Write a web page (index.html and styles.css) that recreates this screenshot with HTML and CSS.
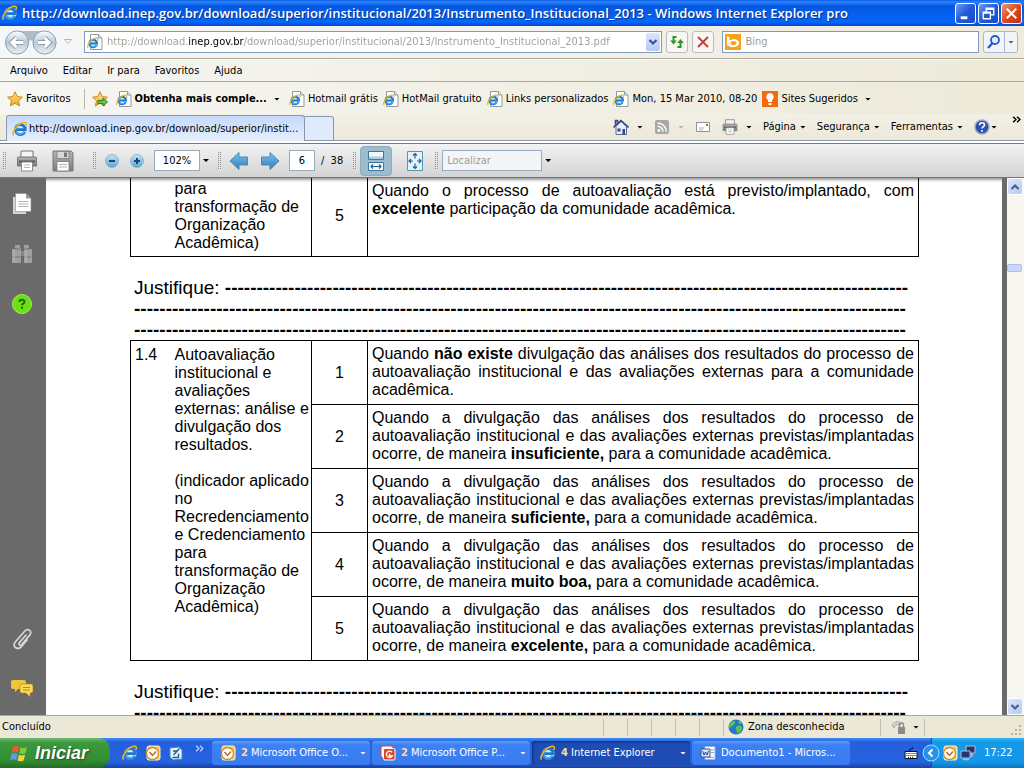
FILE: index.html
```html
<!DOCTYPE html>
<html lang="pt-BR">
<head>
<meta charset="utf-8">
<title>Instrumento_Institucional_2013 - Windows Internet Explorer pro</title>
<link rel="stylesheet" href="styles.css">
</head>
<body>
<svg class="defs" aria-hidden="true">
  <defs>
    <linearGradient id="gBlue" x1="0" y1="0" x2="0" y2="1"><stop offset="0" stop-color="#7cc4ee"/><stop offset="1" stop-color="#2b7cb8"/></linearGradient>
    <linearGradient id="gLight" x1="0" y1="0" x2="0" y2="1"><stop offset="0" stop-color="#c9e4f4"/><stop offset="1" stop-color="#5aa3d2"/></linearGradient>
    <linearGradient id="gBall" x1="0" y1="0" x2="0" y2="1"><stop offset="0" stop-color="#fff"/><stop offset=".5" stop-color="#b7c9d6"/><stop offset="1" stop-color="#e8f2f8"/></linearGradient>
    <linearGradient id="gStar" x1="0" y1="0" x2="0" y2="1"><stop offset="0" stop-color="#ffe684"/><stop offset="1" stop-color="#f7a51b"/></linearGradient>
    <linearGradient id="gGrey" x1="0" y1="0" x2="0" y2="1"><stop offset="0" stop-color="#b4b4b4"/><stop offset="1" stop-color="#7c7c7c"/></linearGradient>
    <symbol id="ie" viewBox="0 0 16 16">
      <circle cx="8.300" cy="8.500" r="6.300" fill="#d3edfc"/>
      <path d="M12.800 10.800A5 5 0 1 1 13.300 8.600H5" fill="none" stroke="#1e78cf" stroke-width="2.800"/>
      <path d="M12.300 10.800A4.700 4.700 0 0 1 4 10.500" fill="none" stroke="#52bdf2" stroke-width="1.200"/>
      <path d="M1.600 14.600C-.8 12.200 4.600 3.400 10.800 1.500c3.200-1 4.400.6 3 3.400" fill="none" stroke="#f0b51e" stroke-width="1.600"/>
    </symbol>
    <symbol id="iepage" viewBox="0 0 16 16">
      <path d="M3.500.5h8l3.500 3.500v11.500h-11.500z" fill="#fff" stroke="#8d99a5"/>
      <path d="M11.500.5v3.500h3.500" fill="#dde5ec" stroke="#8d99a5"/>
      <use href="#ie" x="0" y="3" width="12" height="12"/>
    </symbol>
    <symbol id="star" viewBox="0 0 16 16">
      <path d="M8 .8l2.200 4.800 5.200.6-3.900 3.500 1.100 5.200L8 12.300l-4.600 2.600 1.100-5.200L.6 6.200l5.200-.6z" fill="url(#gStar)" stroke="#c8891c"/>
    </symbol>
    <symbol id="outlook" viewBox="0 0 16 16">
      <rect x="2" y="1" width="13" height="14" rx="2" fill="#f6c65c" stroke="#fff3cf"/>
      <circle cx="7.500" cy="8.500" r="6" fill="#fff" stroke="#d8891b" stroke-width="1.300"/>
      <path d="M4.500 7l3 3.500L11 6.500" fill="none" stroke="#b8661b" stroke-width="1.400"/>
    </symbol>
    <symbol id="printer" viewBox="0 0 22 22">
      <path d="M5 8V1h12v7" fill="#f5f5f5" stroke="#777"/>
      <path d="M1.500 8q0-1 1-1h17q1 0 1 1v8h-19z" fill="url(#gGrey)" stroke="#777"/>
      <path d="M3 11.500h16" stroke="#555" stroke-width="2"/>
      <path d="M5.500 12h11v9h-11z" fill="#fff" stroke="#888"/>
      <path d="M8 15h6M8 17.500h6" stroke="#9cb9d0"/>
    </symbol>
  </defs>
</svg>

<header class="titlebar">
  <svg class="i16" viewBox="0 0 16 16"><use href="#ie"/></svg>
  <h1 class="title">http://download.inep.gov.br/download/superior/institucional/2013/Instrumento_Institucional_2013 - Windows Internet Explorer pro</h1>
  <button class="winbtn" aria-label="Minimizar"><svg viewBox="0 0 20 20"><path d="M5 14.500h7" stroke="#fff" stroke-width="3"/></svg></button>
  <button class="winbtn" aria-label="Restaurar"><svg viewBox="0 0 20 20"><path d="M7.500 8V4.500h8v7H12M7.500 5.500h8M4.500 8.500h7.500v7H4.500zM4.500 9.500H12" fill="none" stroke="#fff" stroke-width="1.400"/></svg></button>
  <button class="winbtn close" aria-label="Fechar"><svg viewBox="0 0 20 20"><path d="M5 5l10 10M15 5L5 15" stroke="#fff" stroke-width="2.200"/></svg></button>
</header>

<div class="navbar">
  <svg class="backfwd" viewBox="0 0 56 28" role="img" aria-label="Voltar e avançar">
    <path d="M12 2h32q8 3 8 10H4q0-7 8-10z" fill="#b4bcc3"/>
    <circle cx="12.500" cy="14" r="12" fill="url(#gBall)" stroke="#8d9ba8"/>
    <circle cx="41" cy="14" r="12" fill="url(#gBall)" stroke="#8d9ba8"/>
    <path d="M19 14H7M12 9l-5 5 5 5M34 14h12M41 9l5 5-5 5" fill="none" stroke="#8294a6" stroke-width="4.600"/>
    <path d="M19 14H7M12 9l-5 5 5 5M34 14h12M41 9l5 5-5 5" fill="none" stroke="#fff" stroke-width="3"/>
  </svg>
  <svg class="hist" viewBox="0 0 8 6"><path d="M.5.500h7L4 4.500z" fill="#fff" stroke="#b5b5b5"/></svg>
  <div class="address">
    <svg class="i16" viewBox="0 0 16 16"><use href="#iepage"/></svg>
    <input class="url" type="text" aria-label="Endereço" value="http://download.inep.gov.br/download/superior/institucional/2013/Instrumento_Institucional_2013.pdf">
    <button class="drop" aria-label="Endereços recentes"><svg viewBox="0 0 12 12"><path d="M2.500 4L6 7.500 9.500 4" fill="none" stroke="#39528c" stroke-width="2.200"/></svg></button>
  </div>
  <button class="navbtn" aria-label="Atualizar"><svg class="i16" viewBox="0 0 16 16"><path d="M7.500 3H4.500v5" fill="none" stroke="#2d9430" stroke-width="2"/><path d="M1.200 6.500h6.600L4.500 10.500z" fill="#2d9430"/><path d="M8.500 13h3V8" fill="none" stroke="#2d9430" stroke-width="2"/><path d="M8.200 9h6.600L11.500 5z" fill="#2d9430"/></svg></button>
  <button class="navbtn" aria-label="Parar"><svg class="i16" viewBox="0 0 16 16"><path d="M3 3l10 10M13 3L3 13" stroke="#c33a41" stroke-width="1.800"/></svg></button>
  <div class="search">
    <svg class="i16" viewBox="0 0 16 16"><rect width="16" height="16" fill="#f7a11c"/><path d="M2 2l2.500 1v3.500C8 4.500 14 5 14 9s-6 5-9.500 3.500L2 11z" fill="#fff"/><ellipse cx="8.500" cy="9" rx="3" ry="2" fill="#f7a11c"/></svg>
    <input class="bing" type="text" aria-label="Pesquisar" placeholder="Bing">
  </div>
  <div class="searchbtns">
    <button aria-label="Pesquisar"><svg class="i16" viewBox="0 0 16 16"><circle cx="9" cy="6" r="4" fill="#e5f0ff" stroke="#2b57c8" stroke-width="1.800"/><path d="M6.500 9L2 14" stroke="#2b57c8" stroke-width="2.400"/></svg></button>
    <button class="narrow" aria-label="Opções de pesquisa"><i class="caret blue"></i></button>
  </div>
</div>

<nav class="menubar">
  <button>Arquivo</button><button>Editar</button><button>Ir para</button><button>Favoritos</button><button>Ajuda</button>
</nav>

<div class="favbar">
  <button class="favmain"><svg class="i16" viewBox="0 0 16 16"><use href="#star"/></svg>Favoritos</button>
  <button class="addfav" aria-label="Adicionar a favoritos"><svg class="i16" viewBox="0 0 16 16"><use href="#star"/><path d="M6 9.500h5V7l4.500 4-4.500 4v-2.500H6z" fill="#62c544" stroke="#23852a"/></svg></button>
  <a href="#" class="fav"><svg class="i16" viewBox="0 0 16 16"><use href="#iepage"/></svg><b>Obtenha mais comple...</b><i class="caret"></i></a>
  <a href="#" class="fav"><svg class="i16" viewBox="0 0 16 16"><use href="#iepage"/></svg>Hotmail grátis</a>
  <a href="#" class="fav"><svg class="i16" viewBox="0 0 16 16"><use href="#iepage"/></svg>HotMail gratuito</a>
  <a href="#" class="fav"><svg class="i16" viewBox="0 0 16 16"><use href="#iepage"/></svg>Links personalizados</a>
  <a href="#" class="fav"><svg class="i16" viewBox="0 0 16 16"><use href="#iepage"/></svg>Mon, 15 Mar 2010, 08-20</a>
  <a href="#" class="fav"><svg class="i16" viewBox="0 0 16 16"><rect width="16" height="16" fill="#f26a12"/><path d="M8 2a4 4 0 0 1 2 7.300V11H6V9.300A4 4 0 0 1 8 2zM6.500 12h3v2h-3z" fill="#fff"/></svg>Sites Sugeridos<i class="caret"></i></a>
</div>

<div class="tabrow">
  <button class="tab"><svg class="i16" viewBox="0 0 16 16"><use href="#ie"/></svg><span>http://download.inep.gov.br/download/superior/instit...</span></button>
  <button class="newtab" aria-label="Nova guia"></button>
  <div class="commands">
    <button aria-label="Página inicial"><svg class="i16" viewBox="0 0 16 16"><path d="M3 7.500v8h10.500v-8L8 2.500z" fill="#e8edf7" stroke="#5a6a96"/><path d="M.5 8.500L8 1.500l7.500 7M2.500 5.500v-4h2v2" fill="none" stroke="#33458a" stroke-width="1.600"/><path d="M9.500 10h2.500v5.500H9.500zM4.500 9.500h3v3h-3z" fill="#33458a"/></svg><i class="caret"></i></button>
    <button aria-label="Feeds"><svg class="i16" viewBox="0 0 16 16"><rect x="1" y="1" width="14" height="14" rx="2" fill="#a9a9a3"/><circle cx="4.800" cy="11.500" r="1.400" fill="#fff"/><path d="M3.500 7.300a5.400 5.400 0 0 1 5.400 5.400M3.500 4a8.800 8.800 0 0 1 8.800 8.800" fill="none" stroke="#fff" stroke-width="1.500"/></svg><i class="caret off"></i></button>
    <button aria-label="Ler email"><svg class="i16" viewBox="0 0 16 16"><path d="M1.500 3.500h13v9h-13z" fill="#fff" stroke="#8f8f9b"/><path d="M4 9h5M4 10.800h4" stroke="#b5b5c0"/><path d="M11 5h2v2h-2z" fill="#c64a4a"/></svg></button>
    <button aria-label="Imprimir"><svg class="i16" viewBox="0 0 22 22"><use href="#printer"/></svg><i class="caret"></i></button>
    <button>Página<i class="caret"></i></button>
    <button>Segurança<i class="caret"></i></button>
    <button>Ferramentas<i class="caret"></i></button>
    <button class="help" aria-label="Ajuda"><svg class="i16" viewBox="0 0 16 16"><circle cx="8" cy="8" r="7" fill="#2f4fae" stroke="#9aa9cc" stroke-width="1.500"/><path d="M5.500 6.200c0-3.400 5-3 5-.3C10.500 7.700 8 7.600 8 9.600M8 11v1.800" fill="none" stroke="#fff" stroke-width="1.700"/></svg><i class="caret"></i></button>
  </div>
  <button class="more" aria-label="Mais comandos"><svg viewBox="0 0 8 6"><path d="M1 .5L3.500 3 1 5.500M4.500.5L7 3 4.500 5.500" fill="none" stroke="#000" stroke-width="1.300"/></svg></button>
</div>

<div class="pdfbar">
  <i class="grip"></i>
  <button class="pb" aria-label="Imprimir"><svg class="i22" viewBox="0 0 22 22"><use href="#printer"/></svg></button>
  <button class="pb" aria-label="Salvar"><svg class="i22" viewBox="0 0 22 22"><path d="M1 1h18l2 2v18H1z" fill="url(#gGrey)" stroke="#777"/><path d="M5 1.500h12v7H5z" fill="#d8d8d8" stroke="#888"/><path d="M12 2.500h3v4.500h-3z" fill="#777"/><path d="M5 11.500h12v9.500H5z" fill="#fff" stroke="#888"/><path d="M7 14.500h8M7 17h8" stroke="#9cb9d0"/></svg></button>
  <i class="grip wide"></i>
  <button class="zoomb" aria-label="Menos zoom"><svg class="i16" viewBox="0 0 16 16"><circle cx="8" cy="8" r="6.500" fill="url(#gLight)" stroke="#8bb8d4"/><path d="M5 8h6" stroke="#164a75" stroke-width="2"/></svg></button>
  <button class="zoomb" aria-label="Mais zoom"><svg class="i16" viewBox="0 0 16 16"><circle cx="8" cy="8" r="6.500" fill="url(#gLight)" stroke="#8bb8d4"/><path d="M5 8h6M8 5v6" stroke="#164a75" stroke-width="2"/></svg></button>
  <input class="box zoomv" type="text" aria-label="Zoom" value="102%"><button class="cb" aria-label="Níveis de zoom"><i class="caret"></i></button>
  <i class="grip"></i>
  <button class="arrow" aria-label="Página anterior"><svg class="i20" viewBox="0 0 20 20"><path d="M1 10l9-8.500V6h8.500v8H10v4.500z" fill="url(#gBlue)" stroke="#4f88ad"/></svg></button>
  <button class="arrow" aria-label="Próxima página"><svg class="i20" viewBox="0 0 20 20"><path d="M19 10l-9-8.500V6H1.500v8H10v4.500z" fill="url(#gBlue)" stroke="#4f88ad"/></svg></button>
  <input class="box pageno" type="text" aria-label="Página" value="6"><span class="total">/&nbsp; 38</span>
  <i class="grip"></i>
  <button class="fit on" aria-label="Ajustar à largura"><svg class="i20" viewBox="0 0 20 20"><path d="M2.500.5h15v8h-15zM2.500 11.500h15v8h-15z" fill="#f2f8fc" stroke="#3f7698"/><path d="M3 5.500h14V8H3z" fill="#a9cfe4"/><path d="M5 15.500h10M7 13.500l-2 2 2 2M13 13.500l2 2-2 2" fill="none" stroke="#24618b" stroke-width="1.200"/></svg></button>
  <button class="fit" aria-label="Ajustar página"><svg class="i20" viewBox="0 0 20 20"><path d="M2.500.5h15v19h-15z" fill="#e4f1f9" stroke="#5b93b5"/><path d="M10 2.500v5M8 4.500l2-2 2 2M10 17.500v-5M8 15.500l2 2 2-2M4 10h4M6 8l-2 2 2 2M16 10h-4M14 8l2 2-2 2" fill="none" stroke="#24618b" stroke-width="1.200"/></svg></button>
  <i class="grip"></i>
  <input class="box find" type="text" aria-label="Localizar" placeholder="Localizar"><button class="cb" aria-label="Opções de busca"><i class="caret"></i></button>
</div>

<main class="viewer">
  <aside class="side">
    <button aria-label="Páginas"><svg class="i22" viewBox="0 0 22 22"><path d="M2 4h13v17H2z" fill="#d5d5d5"/><path d="M4.500.5H15l5 5v13H4.500z" fill="#fff" stroke="#8a8a8a" stroke-width=".6"/><path d="M15 .5v5h5z" fill="#999"/><path d="M7.500 8.500h10M7.500 11h10M7.500 13.500h10" stroke="#b3b3b3"/></svg></button>
    <button aria-label="Localizar"><svg class="i22" viewBox="0 0 22 22"><path d="M4 2h5v3h1v15H1V6h3zM13 2h5v4h3v14h-8V5z" fill="#a0a0a0"/><path d="M1.500 14h8M13.500 14h7M4 6h5M13 6h5" stroke="#757575"/><path d="M10 8h3v5h-3z" fill="#858585"/><path d="M3 7v12M15 7v12" stroke="#bdbdbd"/></svg></button>
    <button aria-label="Como fazer"><svg class="i22" viewBox="0 0 22 22"><circle cx="11" cy="11" r="9.500" fill="#6be012" stroke="#a6ec5c"/><path d="M8.500 9c0-3 5-2.800 5-.3 0 2-2.600 1.800-2.600 3.600M11 13.800v2" fill="none" stroke="#1d6a10" stroke-width="2"/></svg></button>
    <span class="grow"></span>
    <button aria-label="Anexos"><svg class="i22" viewBox="0 0 22 22"><path d="M15.500 6.500l-7 8c-1.500 2 .8 3.700 2.300 2.100l8-9.600c3-4-2-7-5-4l-9.500 11c-3.500 4.500 2 8.500 5.800 5l6.400-7.500" fill="none" stroke="#d8d8d8" stroke-width="1.700"/></svg></button>
    <button aria-label="Comentários"><svg class="i22" viewBox="0 0 22 22"><path d="M2 2h11q2 0 2 2v5q0 2-2 2H7l-3 3v-3H2q-2 0-2-2V4q0-2 2-2z" fill="#f0c53c"/><path d="M11 6h9q2 0 2 2v5q0 2-2 2h-1v4l-4-4h-4q-2 0-2-2V8q0-2 2-2z" fill="#ffdb55" stroke="#a5821f" stroke-width=".6"/><path d="M12 9.500h7M12 12h7" stroke="#b48a1d"/></svg></button>
  </aside>

  <article class="page">
    <table class="grid first">
      <colgroup><col class="c1"><col class="c2"><col class="c3"><col></colgroup>
      <tr><td class="id"></td><td class="name">para<br>transformação de Organização Acadêmica)</td><td class="num">5</td><td class="desc">Quando o processo de autoavaliação está previsto/implantado, com <b>excelente</b> participação da comunidade acadêmica.</td></tr>
    </table>
    <p class="just">Justifique: <b>------------------------------------------------------------------------------------------------------------</b></p>
    <p class="just"><b>--------------------------------------------------------------------------------------------------------------------------</b></p>
    <p class="just"><b>--------------------------------------------------------------------------------------------------------------------------</b></p>
    <table class="grid">
      <colgroup><col class="c1"><col class="c2"><col class="c3"><col></colgroup>
      <tr><td class="id" rowspan="5">1.4</td><td class="name" rowspan="5">Autoavaliação institucional e avaliações externas: análise e divulgação dos resultados.<br><br>(indicador aplicado no Recredenciamento e Credenciamento para transformação de Organização Acadêmica)</td><td class="num">1</td><td class="desc">Quando <b>não existe</b> divulgação das análises dos resultados do processo de autoavaliação institucional e das avaliações externas para a comunidade acadêmica.</td></tr>
      <tr><td class="num">2</td><td class="desc">Quando a divulgação das análises dos resultados do processo de autoavaliação institucional e das avaliações externas previstas/implantadas ocorre, de maneira <b>insuficiente,</b> para a comunidade acadêmica.</td></tr>
      <tr><td class="num">3</td><td class="desc">Quando a divulgação das análises dos resultados do processo de autoavaliação institucional e das avaliações externas previstas/implantadas ocorre, de maneira <b>suficiente,</b> para a comunidade acadêmica.</td></tr>
      <tr><td class="num">4</td><td class="desc">Quando a divulgação das análises dos resultados do processo de autoavaliação institucional e das avaliações externas previstas/implantadas ocorre, de maneira <b>muito boa,</b> para a comunidade acadêmica.</td></tr>
      <tr><td class="num">5</td><td class="desc">Quando a divulgação das análises dos resultados do processo de autoavaliação institucional e das avaliações externas previstas/implantadas ocorre, de maneira <b>excelente,</b> para a comunidade acadêmica.</td></tr>
    </table>
    <p class="just">Justifique: <b>------------------------------------------------------------------------------------------------------------</b></p>
    <p class="just"><b>--------------------------------------------------------------------------------------------------------------------------</b></p>
  </article>

  <div class="scroll">
    <button class="sbtn" aria-label="Rolar para cima"><svg viewBox="0 0 12 12"><path d="M2.500 8L6 4.500 9.500 8" fill="none" stroke="#4d6185" stroke-width="2.200"/></svg></button>
    <span class="track"><i class="thumb"></i></span>
    <button class="sbtn" aria-label="Rolar para baixo"><svg viewBox="0 0 12 12"><path d="M2.500 4L6 7.500 9.500 4" fill="none" stroke="#4d6185" stroke-width="2.200"/></svg></button>
  </div>
</main>

<footer class="status">
  <span class="grow">Concluído</span>
  <i class="cell"></i><i class="cell"></i><i class="cell"></i><i class="cell"></i><i class="cell"></i>
  <span class="zone"><svg class="i16" viewBox="0 0 16 16"><circle cx="8" cy="8" r="7.500" fill="#2277c8"/><path d="M3 3c3-2 5-1 4 1s-1 2-3 3-2 3-3 2 0-4 2-6zM9 7c3-1 5 0 5 2s-2 5-4 5-1-3-2-4 0-2 1-3zM10 2c2 0 4 2 4 3h-3z" fill="#67bf4b"/></svg>Zona desconhecida</span>
  <span class="lock"><svg class="i16" viewBox="0 0 16 16"><path d="M1 6c3-4 7-4 9-2l-1 2C6 5 4 6 3 9z" fill="#d5d5d0" stroke="#aaa"/><path d="M7 8h7v7H7z" fill="#8b8b8b"/><path d="M8.500 8V6a2 2 0 0 1 4 0v2" fill="none" stroke="#8b8b8b" stroke-width="1.400"/></svg><i class="caret"></i></span>
  <span class="cell end"></span>
  <svg class="sizer" viewBox="0 0 12 12"><path d="M9 1h2v2H9zM5 5h2v2H5zM9 5h2v2H9zM1 9h2v2H1zM5 9h2v2H5zM9 9h2v2H9z" fill="#b8b4a2"/></svg>
</footer>

<div class="taskbar">
  <button class="start"><svg class="flag" viewBox="0 0 20 20"><path d="M3 4c2-1.500 4-1.500 6-.3L8 9.500C6 8.400 4 8.500 1.800 9.800z" fill="#ef5a2b"/><path d="M10.500 4.300c2 1 4 1 6.500-.3l-1.500 6c-2 1.200-4 1.200-6.200.2z" fill="#84c83d"/><path d="M1.500 11.300c2-1.300 4-1.300 6-.2L6.200 17C4.200 16 2.300 16.100.2 17.200z" fill="#5d9bf2"/><path d="M9 11.800c2 1 4 1 6.200-.2L13.600 17.500c-2 1.200-4 1-6.100 0z" fill="#fbd03b"/></svg>Iniciar</button>
  <div class="quick">
    <button aria-label="Internet Explorer"><svg class="i16" viewBox="0 0 16 16"><use href="#ie"/></svg></button>
    <button aria-label="Outlook"><svg class="i16" viewBox="0 0 16 16"><use href="#outlook"/></svg></button>
    <button aria-label="Mostrar área de trabalho"><svg class="i16" viewBox="0 0 16 16"><path d="M2 3l9-1 3 3v9l-9 1-3-3z" fill="#e8f4fb" stroke="#3a8fc0"/><path d="M11.500 3.500l-6 6.500M5 6h4M4.500 12.500h6v-4" fill="none" stroke="#1b6091" stroke-width="1.400"/></svg></button>
    <svg class="chev" viewBox="0 0 8 6"><path d="M1 .5L3.500 3 1 5.500M4.500.5L7 3 4.500 5.500" fill="none" stroke="#b9d3ff" stroke-width="1.100"/></svg>
  </div>
  <button class="task"><svg class="i16" viewBox="0 0 16 16"><use href="#outlook"/></svg><span><b>2</b> Microsoft Office O...</span><i class="caret white"></i></button>
  <button class="task"><svg class="i16" viewBox="0 0 16 16"><rect x="1" y="1" width="12" height="12" rx="2" fill="#fff" stroke="#d6492b"/><rect x="3.500" y="3.500" width="11.500" height="11.500" rx="1.500" fill="#d6492b" stroke="#fff"/><path d="M12 7.200a3.200 3.200 0 1 0 .3 3.800H9.500V8.500" fill="none" stroke="#fff" stroke-width="1.300"/></svg><span><b>2</b> Microsoft Office P...</span><i class="caret white"></i></button>
  <button class="task active"><svg class="i16" viewBox="0 0 16 16"><use href="#ie"/></svg><span><b>4</b> Internet Explorer</span><i class="caret white"></i></button>
  <button class="task"><svg class="i16" viewBox="0 0 16 16"><path d="M5 1.500h10v13H5z" fill="#fff" stroke="#9ab0da"/><path d="M11 5h3M11 7.500h3M7 12.500h7" stroke="#8fa6d6"/><path d="M1 4h9v8H1z" fill="#dce6f8" stroke="#33549c"/><path d="M2.500 6l1.500 4 1.500-3L7 10l1.500-4" fill="none" stroke="#26458e"/></svg><span>Documento1 - Micros...</span></button>
  <span class="grow"></span>
  <svg class="kbd" viewBox="0 0 14 14"><path d="M1 5.500h12v7H1z" fill="#fff" stroke="#111"/><path d="M2.500 7.500h9M2.500 9.500h9M4 11.300h6" stroke="#111" stroke-dasharray="1 1"/><path d="M5 5q0-2 2-2t2-2" fill="none" stroke="#111"/></svg>
  <div class="tray">
    <button class="hide" aria-label="Ocultar ícones"><svg viewBox="0 0 18 18"><circle cx="9" cy="9" r="8" fill="#2593ee" stroke="#a5dcff"/><path d="M10.500 5.500L7 9l3.500 3.500" fill="none" stroke="#fff" stroke-width="2"/></svg></button>
    <svg class="i16" viewBox="0 0 16 16"><use href="#outlook"/></svg>
    <svg class="i16" viewBox="0 0 16 16"><path d="M6 1h9v7H6z" fill="#28346e" stroke="#b6bfd9"/><path d="M1 6h9v7H1z" fill="#28346e" stroke="#b6bfd9"/><path d="M3 14.500h6M12 8v4" stroke="#b6bfd9" stroke-width="1.500"/></svg>
    <time>17:22</time>
  </div>
</div>
</body>
</html>
```
FILE: styles.css
```css
* { box-sizing: border-box; }
body {
  margin: 0;
  height: 100vh;
  display: flex;
  flex-direction: column;
  overflow: hidden;
  background: #ece9d8;
  color: #000;
  font: 11px/14px "DejaVu Sans Condensed", "DejaVu Sans", sans-serif;
}
button, input { font: inherit; color: inherit; border: 0; background: none; padding: 0; margin: 0; }
button { display: flex; align-items: center; white-space: nowrap; }
input { outline: 0; min-width: 0; }
svg { display: block; flex: none; }
a { color: inherit; text-decoration: none; }
.defs { position: absolute; width: 0; height: 0; }
.i16 { width: 16px; height: 16px; }
.i20 { width: 20px; height: 20px; }
.i22 { width: 22px; height: 22px; }
.grow { flex: 1; }
.caret { flex: none; width: 6px; height: 3px; background: #000; clip-path: polygon(0 0, 100% 0, 50% 100%); }
.caret.off { background: #b5b2a5; }
.caret.blue { background: #2b57c8; }
.caret.white { background: #fff; margin-left: auto; }

.titlebar {
  flex: none;
  height: 26px;
  display: flex;
  align-items: center;
  gap: 2px;
  padding: 0 2px;
  color: #fff;
  background: linear-gradient(#0a5ee8, #2b85fb 2px, #0557e0 6px, #0560ee 14px, #0567fb 22px, #0347cf);
}
.title {
  flex: 1;
  min-width: 0;
  margin: 0 0 0 2px;
  overflow: hidden;
  white-space: nowrap;
  font: 600 13px/18px "Open Sans", "Noto Sans", sans-serif;
  text-shadow: 1px 1px 1px #0b2f86;
}
.winbtn { width: 21px; height: 21px; border: 1px solid #fff; border-radius: 3px; background: linear-gradient(135deg, #6d9bf3, #2258d8 50%, #1a4cc6); }
.winbtn svg { width: 19px; height: 19px; }
.winbtn.close { background: linear-gradient(135deg, #f0937a, #dd4a20 50%, #bd3410); }

.navbar {
  flex: none;
  height: 33px;
  display: flex;
  align-items: center;
  padding: 0 6px 0 5px;
  background: linear-gradient(90deg, #f5f7f9, #eeebdd);
  border-bottom: 1px solid #aca899;
}
.backfwd { width: 54px; height: 27px; }
.hist { width: 8px; height: 6px; margin: 0 12px 0 5px; }
.address, .search { display: flex; align-items: center; height: 22px; background: #fff; border: 1px solid #7f9db9; }
.address { flex: 579; padding: 0 1px 0 2px; }
.url {
  flex: 1;
  margin-left: 4px;
  font-size: 11px;
  color: transparent;
  background: linear-gradient(90deg, #a09c94 81px, #000 81px 137px, #a09c94 137px);
  -webkit-background-clip: text;
  background-clip: text;
}
.drop { width: 14px; height: 18px; justify-content: center; background: linear-gradient(#dbe6fd, #b5c9f5); border-radius: 2px; }
.drop svg { width: 12px; height: 12px; }
.navbtn { width: 22px; height: 22px; margin-left: 4px; justify-content: center; border: 1px solid #b9bec6; border-radius: 3px; background: #f7f6f1; }
.search { flex: 255; margin: 0 4px 0 8px; padding-left: 2px; }
.bing { flex: 1; margin-left: 4px; }
.bing::placeholder, .find::placeholder { color: #a09c94; opacity: 1; }
.searchbtns { display: flex; height: 22px; border: 1px solid #a9b8d4; border-radius: 3px; background: #f2f4f6; }
.searchbtns button { width: 20px; justify-content: center; }
.searchbtns .narrow { width: 13px; border-left: 1px solid #a9b8d4; }

.menubar {
  flex: none;
  height: 23px;
  display: flex;
  align-items: center;
  gap: 15px;
  padding: 0 10px;
  background: linear-gradient(90deg, #f5f5f2, #edead9);
  border-top: 1px solid #fff;
  border-bottom: 1px solid #aca899;
}

.favbar { flex: none; height: 32px; display: flex; align-items: center; padding: 2px 7px 0; background: linear-gradient(90deg, #f6f6f3, #edead9); }
.favmain { gap: 3px; height: 20px; padding-right: 13px; border-right: 1px solid #b9b6a6; }
.addfav { margin: 0 8px 0 7px; }
.fav { display: flex; align-items: center; gap: 3px; margin-right: 5px; white-space: nowrap; }
.fav .caret { margin: 0 4px; }

.tabrow {
  flex: none;
  height: 30px;
  display: flex;
  align-items: flex-end;
  padding: 0 3px 3px 6px;
  background: linear-gradient(#f2f0e6, #ece9d8 26px, #8b98ab 26px 27px, #fff 27px 29px, #777 29px);
}
.tab {
  width: 299px;
  height: 26px;
  padding: 0 6px 0 5px;
  gap: 1px;
  overflow: hidden;
  border: 1px solid #8b98ab;
  border-bottom: 0;
  border-radius: 3px 3px 0 0;
  background: linear-gradient(#c5d9fb, #e6effd);
}
.newtab { width: 29px; height: 25px; border: 1px solid #8b98ab; border-left: 0; border-radius: 0 3px 0 0; background: #dfeafc; }
.commands { margin-left: auto; height: 28px; display: flex; align-items: center; gap: 11px; }
.commands button { gap: 4px; }
.commands button:nth-child(-n+4) { gap: 8px; }
.commands .help { gap: 1px; }
.more { align-self: flex-start; margin: 2px 0 0 15px; }
.more svg { width: 9px; height: 7px; }

.pdfbar {
  flex: none;
  height: 34px;
  display: flex;
  align-items: center;
  padding: 0 3px;
  background: linear-gradient(#f3f3f3, #d3d3d3);
  border-bottom: 1px solid #777;
}
.grip { width: 4px; height: 18px; background: repeating-linear-gradient(transparent 0 1px, #e4e4e4 1px 2px), linear-gradient(90deg, #8f8f8f 1px, transparent 1px 2px, #8f8f8f 2px 3px, transparent 3px); }
.grip.wide { margin-left: 17px; }
.pb { margin-left: 9px; width: 27px; justify-content: center; }
.pb:first-of-type { margin-left: 6px; margin-right: 3px; }
.pb + .pb { margin-left: 6px; }
.zoomb { margin-left: 7px; width: 18px; }
.box { height: 21px; border: 1px solid #9aabbb; background: #fff; text-align: center; }
.zoomv { width: 46px; margin-left: 7px; }
.cb { width: 12px; height: 21px; justify-content: center; margin-right: 6px; }
.arrow { margin: 0 4px 0 7px; }
.pageno { width: 26px; margin-left: 5px; }
.total { margin: 0 10px 0 6px; }
.fit { width: 32px; height: 30px; margin: 0 4px 0 3px; justify-content: center; border-radius: 4px; }
.fit.on { background: #9dbccd; border: 1px solid #8aacbf; }
.find { width: 100px; margin-left: 3px; background: #f4f5f6; text-align: left; padding-left: 4px; }

.viewer { flex: 1; min-height: 0; display: flex; background: #6a6a6a; }
.side { flex: none; width: 46px; padding: 15px 0 15px 11px; display: flex; flex-direction: column; gap: 28px; }
.page {
  flex: 1;
  min-width: 0;
  margin-right: 5px;
  padding: 0 83px 0 84px;
  overflow: hidden;
  background: #fff;
  box-shadow: inset 0 4px 3px -2px #999;
  font: 16px/18px "Liberation Sans", Arial, sans-serif;
}
.grid { width: 100%; border-collapse: collapse; table-layout: fixed; border: 1px solid #000; }
.grid.first { border-top: 0; margin-bottom: 20px; }
.c1 { width: 40px; }
.c2 { width: 141px; }
.c3 { width: 56px; }
.grid td { padding: 5px 4px 4px; vertical-align: top; }
.grid .num, .grid .desc { border: 1px solid #000; }
.grid .num { text-align: center; vertical-align: middle; }
.grid .desc { padding: 4px 4px 5px; text-align: justify; }
.grid .name { padding-right: 0; }
.grid.first td { border-top: 0; padding-top: 2px; }
.grid.first .desc { padding-top: 4px; }
.just { margin: 0 0 0 4px; font-size: 19px; line-height: 21px; white-space: nowrap; }
.grid + .just { margin-top: 20px; }

.scroll { flex: none; width: 17px; display: flex; flex-direction: column; background: #f7f6f1; }
.sbtn { width: 16px; height: 17px; justify-content: center; border: 1px solid #fff; border-radius: 3px; background: linear-gradient(135deg, #dbe6fd, #b5c9f5); }
.sbtn svg { width: 12px; height: 12px; }
.track { flex: 1; display: flex; flex-direction: column; }
.track::before { content: ""; flex: 14 0 0; }
.track::after { content: ""; flex: 86 0 0; }
.thumb { width: 15px; height: 8px; border: 1px solid #a9bff0; border-radius: 2px; background: #c9d8fc; }

.status { flex: none; height: 23px; display: flex; align-items: center; padding-left: 2px; border-top: 1px solid #aca899; background: #ebe8d8; }
.cell { width: 24px; height: 17px; border-left: 1px solid #c4c0ae; }
.cell.end { width: 86px; }
.zone { display: flex; align-items: center; gap: 4px; width: 157px; height: 17px; padding-left: 4px; border-left: 1px solid #c4c0ae; }
.lock { display: flex; align-items: center; gap: 6px; width: 44px; height: 17px; padding-left: 10px; border-left: 1px solid #c4c0ae; }
.sizer { width: 12px; height: 12px; margin: 5px 2px 0 0; }

.taskbar { flex: none; height: 30px; display: flex; align-items: center; color: #fff; background: linear-gradient(#3f8cf3, #245edc 4px, #2663e0 24px, #1941a5); }
.start {
  width: 110px;
  height: 30px;
  padding-left: 10px;
  gap: 5px;
  border-radius: 0 12px 12px 0;
  font: italic bold 18px/24px "Liberation Sans", Arial, sans-serif;
  text-shadow: 1px 1px 2px #1b4a1b;
  background: linear-gradient(#6fb86f, #3c983c 5px, #338f33 22px, #256b25);
}
.flag { width: 20px; height: 20px; }
.quick { display: flex; align-items: center; gap: 7px; width: 102px; padding-left: 12px; }
.chev { width: 9px; height: 7px; margin: 0 0 10px 4px; }
.task { width: 158px; height: 24px; margin-right: 2px; padding: 0 4px 0 8px; gap: 5px; border-radius: 3px; background: linear-gradient(#5c9bfa, #3c81f3 4px, #3a7cf0); }
.task b { color: #ffdf8a; }
.task.active { background: #1c4cb4; box-shadow: inset 1px 1px 2px #0f2f7c; }
.kbd { width: 14px; height: 14px; margin-right: 13px; }
.tray { display: flex; align-items: center; height: 30px; width: 93px; gap: 2px; background: linear-gradient(#35b5f5, #149be8 4px, #1496e8 24px, #0b73c0); border-left: 1px solid #0b4fb0; }
.hide { margin-left: -10px; }
.hide svg { width: 18px; height: 18px; }
.tray time { margin-left: 6px; }
```
